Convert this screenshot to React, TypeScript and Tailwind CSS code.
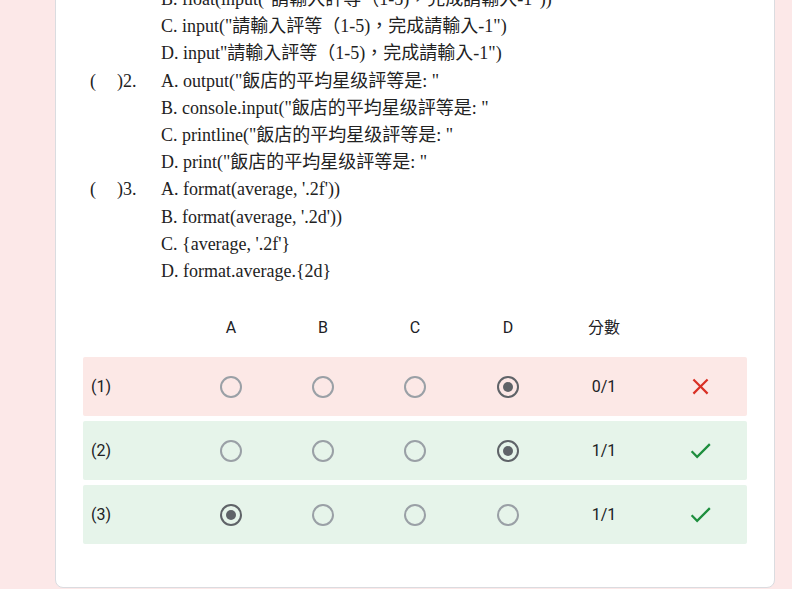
import React from "react";

const serif = { fontFamily: '"Liberation Serif", "Noto Sans CJK TC", serif' };

function Radio({ checked }: { checked?: boolean }) {
  return checked ? (
    <div className="w-[22px] h-[22px] rounded-full border-2 border-[#5f6368] flex items-center justify-center">
      <div className="w-[10px] h-[10px] rounded-full bg-[#5f6368]" />
    </div>
  ) : (
    <div className="w-[22px] h-[22px] rounded-full border-2 border-[#9aa0a6]" />
  );
}

function XIcon() {
  return (
    <svg width="27" height="27" viewBox="0 0 24 24" fill="#d93025">
      <path d="M19 6.41L17.59 5 12 10.59 6.41 5 5 6.41 10.59 12 5 17.59 6.41 19 12 13.41 17.59 19 19 17.59 13.41 12z" />
    </svg>
  );
}

function CheckIcon() {
  return (
    <svg width="27" height="27" viewBox="0 0 24 24" fill="#1e8e3e">
      <path d="M9 16.17L4.83 12l-1.42 1.41L9 19 21 7l-1.41-1.41z" />
    </svg>
  );
}

const lines: { num?: string; text: string }[] = [
  { text: 'B. float(input("請輸入評等（1-5)，完成請輸入-1"))' },
  { text: 'C. input("請輸入評等（1-5)，完成請輸入-1")' },
  { text: 'D. input"請輸入評等（1-5)，完成請輸入-1")' },
  { num: "2.", text: 'A. output("飯店的平均星级評等是: "' },
  { text: 'B. console.input("飯店的平均星级評等是: "' },
  { text: 'C. printline("飯店的平均星级評等是: "' },
  { text: 'D. print("飯店的平均星级評等是: "' },
  { num: "3.", text: "A. format(average, '.2f'))" },
  { text: "B. format(average, '.2d'))" },
  { text: "C. {average, '.2f'}" },
  { text: "D. format.average.{2d}" },
];

const rows = [
  { label: "(1)", sel: 3, score: "0/1", ok: false },
  { label: "(2)", sel: 3, score: "1/1", ok: true },
  { label: "(3)", sel: 0, score: "1/1", ok: true },
];

const cols = "grid grid-cols-[102px_92px_92px_92px_94px_98px_94px] items-center";

export default function App() {
  return (
    <div
      className="h-[589px] w-[792px] overflow-hidden bg-[#fce8e8]"
      style={{ fontFamily: 'Roboto, "Noto Sans CJK TC", sans-serif' }}
    >
      <div className="ml-[55px] w-[720px] -mt-[15px] bg-white border border-[#dadce0] rounded-b-[8px] pb-[43px]">
        <div className="pl-[34px] text-[18px] leading-[27.2px] text-[#222]" style={serif}>
          {lines.map((l, i) => (
            <div key={i} className="flex whitespace-pre">
              <div className="w-[71px] shrink-0">
                {l.num ? (
                  <span className="flex">
                    <span>(</span>
                    <span className="w-[21px]" />
                    <span>){l.num}</span>
                  </span>
                ) : null}
              </div>
              <div>{l.text}</div>
            </div>
          ))}
        </div>

        <div className="px-[27px] text-[16px] text-[#202124]">
          <div className={`${cols} h-[40px] mt-[23px]`}>
            <div />
            {["A", "B", "C", "D", "分數"].map((h) => (
              <div key={h} className="text-center">
                {h}
              </div>
            ))}
            <div />
          </div>
          <div className="mt-[9px] flex flex-col gap-[5px]">
            {rows.map((r) => (
              <div
                key={r.label}
                className={`${cols} h-[59px] rounded-[2px] ${r.ok ? "bg-[#e6f4ea]" : "bg-[#fce8e6]"}`}
              >
                <div className="pl-[8px]">{r.label}</div>
                {[0, 1, 2, 3].map((c) => (
                  <div key={c} className="flex justify-center">
                    <Radio checked={c === r.sel} />
                  </div>
                ))}
                <div className="text-center">{r.score}</div>
                <div className="flex justify-center">{r.ok ? <CheckIcon /> : <XIcon />}</div>
              </div>
            ))}
          </div>
        </div>
      </div>
    </div>
  );
}
